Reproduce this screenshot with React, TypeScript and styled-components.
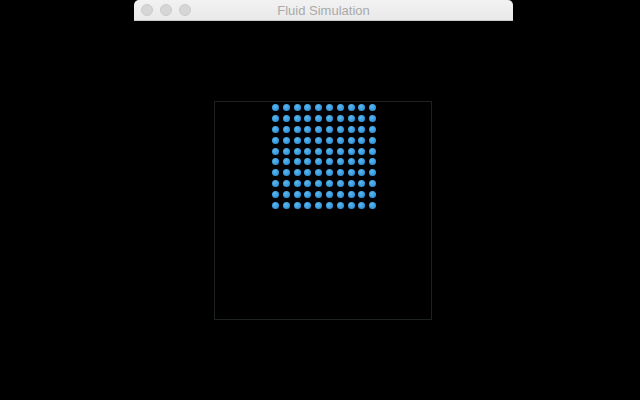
import React from 'react';
import styled, {createGlobalStyle} from 'styled-components';

const GlobalStyle = createGlobalStyle`
  html, body {
    margin: 0;
    padding: 0;
    background: #000;
    width: 640px;
    height: 400px;
    overflow: hidden;
  }
`;

const Screen = styled.div`
  width: 640px;
  height: 400px;
  background: #000;
  display: flex;
  justify-content: flex-start;
  padding-left: 134px;
  box-sizing: border-box;
`;

const Window = styled.div`
  width: 379px;
  display: flex;
  flex-direction: column;
`;

const TitleBar = styled.div`
  height: 20px;
  background: linear-gradient(#f2f2f2, #e9e9e9);
  border-radius: 5px 5px 0 0;
  border-bottom: 1px solid #c8c8c8;
  display: flex;
  align-items: center;
  position: relative;
  padding-left: 7px;
  gap: 7px;
`;

const Light = styled.span`
  width: 12px;
  height: 12px;
  border-radius: 50%;
  background: #d6d6d6;
  border: 0.5px solid #cbcbcb;
  box-sizing: border-box;
`;

const Title = styled.div`
  position: absolute;
  left: 0;
  right: 0;
  top: 0;
  bottom: 0;
  display: flex;
  align-items: center;
  justify-content: center;
  font-family: "Liberation Sans", Arial, sans-serif;
  font-size: 13px;
  color: #a9a9a9;
  pointer-events: none;
`;

const Content = styled.div`
  flex: 1;
  display: flex;
  padding: 80px 0 0 80px;
`;

const Container = styled.div`
  width: 218px;
  height: 219px;
  border: 1px solid #1c2222;
  box-sizing: border-box;
  padding: 2px 0 0 57px;
`;

const Particles = styled.div`
  display: grid;
  grid-template-columns: repeat(10, 7px);
  grid-auto-rows: 7px;
  column-gap: 3.8px;
  row-gap: 3.9px;
`;

const Particle = styled.span`
  width: 7px;
  height: 7px;
  border-radius: 50%;
  background: radial-gradient(circle at 40% 35%, #5ab6ee, #3596da 65%, #2b82c4);
`;

export default function App() {
  const dots = Array.from({length: 100});
  return (
    <>
      <GlobalStyle/>
      <Screen>
        <Window>
          <TitleBar>
            <Light/>
            <Light/>
            <Light/>
            <Title>Fluid Simulation</Title>
          </TitleBar>
          <Content>
            <Container>
              <Particles>
                {dots.map((_, i) => <Particle key={i}/>)}
              </Particles>
            </Container>
          </Content>
        </Window>
      </Screen>
    </>
  );
}
